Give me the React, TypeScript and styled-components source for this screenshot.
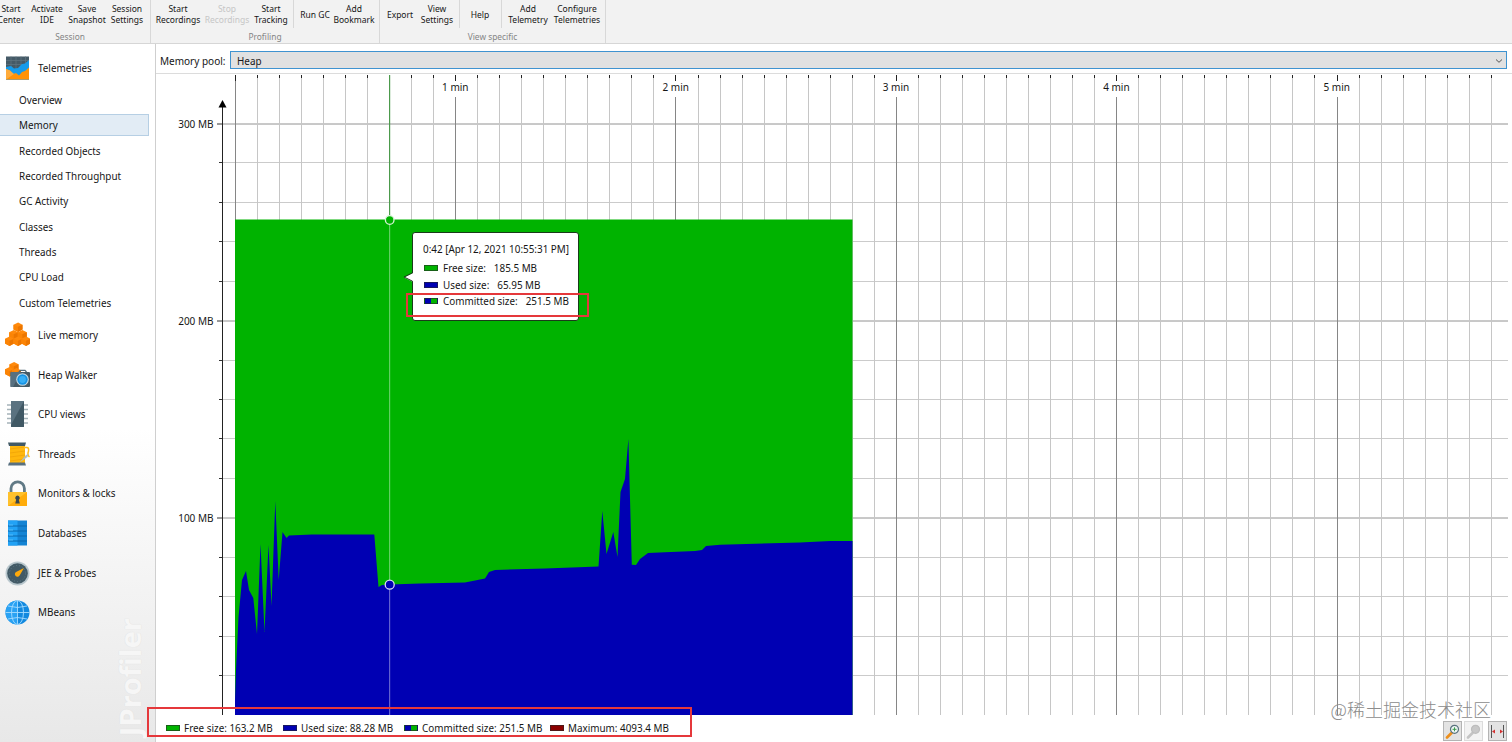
import React from "react";
import styled, { createGlobalStyle } from "styled-components";

const GlobalStyle = createGlobalStyle`
  * { box-sizing: border-box; }
  html, body { margin: 0; padding: 0; }
  body {
    width: 1512px;
    height: 742px;
    overflow: hidden;
    background: #fff;
    color: #161616;
    font-family: "Noto Sans", "Noto Sans CJK SC", sans-serif;
    font-size: 9.9px;
  }
`;

const Window = styled.div`
  position: relative;
  display: flex;
  flex-direction: column;
  width: 1512px;
  height: 742px;
  overflow: hidden;
`;

const Toolbar = styled.div`
  display: flex;
  flex: none;
  height: 44px;
  background: #f2f2f2;
  border-bottom: 1px solid #d6d6d6;
`;

const ToolGroup = styled.div<{ $width: number; $shift?: number }>`
  display: flex;
  flex: none;
  flex-direction: column;
  width: ${(p) => p.$width}px;
  margin-left: ${(p) => p.$shift ?? 0}px;
  border-right: 1px solid #d8d8d8;
`;

const ToolRow = styled.div<{ $pad: number }>`
  display: flex;
  height: 29px;
  padding-left: ${(p) => p.$pad}px;
`;

const Tool = styled.div<{ $width: number; $disabled?: boolean }>`
  display: flex;
  flex: none;
  align-items: center;
  justify-content: center;
  width: ${(p) => p.$width}px;
  height: 28px;
  font-size: 8.5px;
  line-height: 11px;
  text-align: center;
  white-space: pre;
  color: ${(p) => (p.$disabled ? "#c6c6c6" : "#161616")};
`;

const ToolDivider = styled.div<{ $gap: number }>`
  flex: none;
  width: 1px;
  height: 28px;
  margin: 0 ${(p) => p.$gap}px;
  background: #d8d8d8;
`;

const GroupLabel = styled.div`
  height: 14px;
  font-size: 8.4px;
  line-height: 16px;
  text-align: center;
  color: #858585;
`;

const Body = styled.div`
  display: flex;
  flex: 1;
  min-height: 0;
`;

const Sidebar = styled.nav`
  position: relative;
  flex: none;
  width: 156px;
  padding-top: 4px;
  border-right: 1px solid #cfcfcf;
  background: linear-gradient(#fff 0%, #fff 55%, #e8e8e8 100%);
`;

const Section = styled.div`
  display: flex;
  align-items: center;
  gap: 8px;
  height: 39.6px;
  padding-left: 5px;
`;

const SubList = styled.div`
  display: flex;
  flex-direction: column;
  gap: 3.3px;
  padding: 1.6px 0;
`;

const SubItem = styled.div<{ $active?: boolean }>`
  display: flex;
  align-items: center;
  width: 149px;
  height: 22px;
  padding-left: 19px;
  border: 1px solid ${(p) => (p.$active ? "#b6cfe4" : "transparent")};
  border-left: 0;
  background: ${(p) => (p.$active ? "#e2ecf5" : "transparent")};
`;

const Brand = styled.div`
  position: absolute;
  right: 8px;
  bottom: 6px;
  writing-mode: vertical-rl;
  transform: rotate(180deg);
  font: bold 29px/34px "Open Sans", sans-serif;
  color: #f6f6f6;
  text-shadow: 0 0 1px #dadada;
`;

const Main = styled.main`
  position: relative;
  display: flex;
  flex: 1;
  flex-direction: column;
  min-width: 0;
`;

const PoolRow = styled.div`
  display: flex;
  flex: none;
  align-items: center;
  height: 30px;
  padding: 3px 5px 0 4px;
  border-bottom: 1px solid #dcdcdc;
`;

const PoolLabel = styled.div`
  width: 70px;
  padding-top: 1px;
  font-size: 10px;
  white-space: nowrap;
`;

const Select = styled.div`
  display: flex;
  flex: 1;
  align-items: center;
  justify-content: space-between;
  height: 18px;
  padding: 1px 3px 0 6px;
  border: 1px solid #3f93d0;
  background: #e1e1e1;
`;

const ChartArea = styled.div`
  position: relative;
  flex: none;
  height: 642px;

  > svg { display: block; }
`;

const Footer = styled.footer`
  display: flex;
  flex: 1;
  align-items: flex-start;
  justify-content: space-between;
  padding: 4px 5px 0 10px;
`;

const Legend = styled.div`
  display: flex;
  align-items: center;
  height: 16px;
`;

const LegendItem = styled.div<{ $width: number }>`
  display: flex;
  align-items: center;
  gap: 4px;
  width: ${(p) => p.$width}px;
  white-space: nowrap;
`;

const Swatch = styled.span<{ $left: string; $right?: string }>`
  flex: none;
  width: 14px;
  height: 6px;
  border: 1px solid rgba(40, 40, 40, 0.6);
  background: linear-gradient(
    90deg,
    ${(p) => p.$left} 50%,
    ${(p) => p.$right ?? p.$left} 50%
  );
`;

const Buttons = styled.div`
  display: flex;
  align-items: center;
  gap: 2px;
  margin-top: 1px;
`;

const ZoomButton = styled.button<{ $faded?: boolean; $spaced?: boolean }>`
  display: flex;
  align-items: center;
  justify-content: center;
  width: 19px;
  height: 20px;
  margin-left: ${(p) => (p.$spaced ? 3 : 0)}px;
  padding: 0;
  border: 1px solid ${(p) => (p.$faded ? "#dcdcdc" : "#b4b4b4")};
  background: ${(p) => (p.$faded ? "#f3f3f3" : "#e3e3e3")};
`;

const Tooltip = styled.div`
  position: absolute;
  left: 256px;
  top: 158px;
  width: 167px;
  height: 89px;
  padding: 9px 0 0 10px;
  border: 1px solid #1b3a1b;
  border-radius: 3px;
  background: #fff;
`;

const TooltipArrow = styled.svg`
  position: absolute;
  left: -10px;
  top: 37px;
`;

const TooltipTitle = styled.div`
  height: 17px;
  margin-bottom: 1px;
  line-height: 15px;
  white-space: nowrap;
`;

const TooltipRow = styled.div`
  display: flex;
  align-items: center;
  height: 16.6px;
  padding-left: 1px;
  white-space: nowrap;
`;

const TooltipName = styled.span`
  margin: 0 8px 0 5px;
`;

const RedFrame = styled.div<{ $x: number; $y: number; $w: number; $h: number }>`
  position: absolute;
  left: ${(p) => p.$x}px;
  top: ${(p) => p.$y}px;
  width: ${(p) => p.$w}px;
  height: ${(p) => p.$h}px;
  border: 2px solid #e5383b;
`;

const Credit = styled.div`
  position: absolute;
  right: 21px;
  top: 696px;
  font: 300 18px/26px "Noto Sans CJK SC", sans-serif;
  color: #8c8c8c;
  white-space: nowrap;
`;

const GREEN = "#00b300";
const BLUE = "#0000b3";

const Cube = ({ x, y }: { x: number; y: number }) => (
  <g transform={`translate(${x} ${y})`}>
    <path d="M0 2.2 4.6 0 9 2.2 9 7 4.6 9.4 0 7Z" fill="#ff8a0c" />
    <path d="M0 2.2 4.4 4.3 4.6 9.4 0 7Z" fill="#fb8405" />
    <path d="M4.4 4.3 9 2.2 9 7 4.6 9.4Z" fill="#ec7600" />
  </g>
);

const icons: Record<string, React.ReactNode> = {
  telemetries: (
    <>
      <rect x="1" y="1.5" width="23" height="23" fill="#455a67" />
      <path d="M1 5.5H24M1 9.5H24M6 1.5V14M11 1.5V14M16 1.5V14M20.5 1.5V14" stroke="#607582" strokeWidth=".7" />
      <path d="M1 12 6 11 9 13.5 13 13 17 9 20 8.5 24 5V24.5H1Z" fill="#169bea" />
      <path d="M1 14 5 15.5 8 19 11 18 14 20.5 17 17 20 16 24 12.5V24.5H1Z" fill="#ff9206" />
      <path d="M1 24.5 9 19 5 15.5 1 14Z" fill="#ffab3b" />
    </>
  ),
  live: (
    <>
      <Cube x={8.5} y={0.5} />
      <Cube x={4.2} y={8} />
      <Cube x={12.8} y={8} />
      <Cube x={0} y={14.5} />
      <Cube x={8.5} y={14.5} />
      <Cube x={16.5} y={14.5} />
    </>
  ),
  heap: (
    <>
      <Cube x={4.5} y={0} />
      <Cube x={0} y={5} />
      <Cube x={7} y={6} />
      <path d="M14 10 15.5 8.3H20L21.5 10" fill="none" stroke="#526a77" strokeWidth="1.3" />
      <rect x="5.5" y="10" width="19.5" height="15" rx="1" fill="#455a65" />
      <path d="M5.5 11a1 1 0 0 1 1-1H16L8 25H5.5Z" fill="#587080" />
      <circle cx="17.5" cy="17.5" r="6.3" fill="#c8dce5" />
      <circle cx="17.5" cy="17.5" r="5.2" fill="#1793e4" />
      <circle cx="17.5" cy="17.5" r="3.4" fill="#36aef5" />
    </>
  ),
  cpu: (
    <>
      <path d="M2 4H23M2 8.5H23M2 13H23M2 17.5H23M2 22H23" stroke="#a5b3b9" strokeWidth="1.5" />
      <rect x="6" y="0" width="13" height="26" rx=".6" fill="#415965" />
      <path d="M6 0H19L6 24Z" fill="#5a7280" />
    </>
  ),
  threads: (
    <>
      <rect x="5" y="4" width="15" height="18" fill="#ffb70d" />
      <path d="M5 8 20 6M5 12 20 10M5 16 20 14M5 20 20 18" stroke="#f0a307" strokeWidth=".8" />
      <path d="M19 6.5H22Q24 6.500 23.5 10Q22 14 24.5 16" fill="none" stroke="#ffbd1d" strokeWidth="1.5" />
      <path d="M14 22 21 14 23.500 13 22.500 16Z" fill="#b0bdc3" />
      <path d="M3 1.500H21L20 5H4Z" fill="#415965" />
      <path d="M4 21.500H20L21 24.500H3Z" fill="#587080" />
    </>
  ),
  lock: (
    <>
      <path d="M6 13V8.5a6.7 6.7 0 0 1 13.4 0V13" fill="none" stroke="#607985" strokeWidth="2.8" />
      <rect x="3" y="12" width="19" height="14" fill="#ffac0a" />
      <path d="M3 12H22L3 26Z" fill="#ffc12c" />
      <path d="M12.5 15.5a2.4 2.4 0 0 1 1.3 4.3L14.8 23.5H10.2L11.2 19.8A2.4 2.4 0 0 1 12.5 15.5Z" fill="#37464f" />
    </>
  ),
  database: (
    <>
      <rect x="3" y="0.5" width="19" height="25" fill="#1484d4" />
      <rect x="3" y="0.5" width="9.5" height="25" fill="#22a2f5" />
      <path d="M3 6H22M3 11H22M3 16H22M3 21H22" stroke="#0b66ac" strokeWidth="1" />
      <path d="M4 5H8M4 10H8M4 15H8M4 20H8" stroke="#5fc5ff" strokeWidth=".8" />
    </>
  ),
  probes: (
    <>
      <circle cx="12.5" cy="13.5" r="12" fill="#b9c7cd" />
      <circle cx="12.5" cy="13.5" r="10.3" fill="#425a66" />
      <circle cx="12.5" cy="13.5" r="8" fill="none" stroke="#607985" strokeWidth="1" strokeDasharray="1 2" />
      <path d="M19 8 14.9 15A2.6 2.6 0 1 1 11.5 11.7Z" fill="#ffaa0b" />
    </>
  ),
  beans: (
    <>
      <circle cx="12.5" cy="13.5" r="12" fill="#1289df" />
      <path d="M12.5 1.5a12 12 0 0 0 0 24Z" fill="#2aa2f3" />
      <g fill="none" stroke="#a5dbff" strokeWidth=".9">
        <ellipse cx="12.5" cy="13.5" rx="6" ry="12" />
        <path d="M12.5 1.5V25.5M.5 13.5H24.5M3 7Q12.5 10 22 7M3 20Q12.5 17 22 20" />
      </g>
    </>
  ),
};

const SectionRow = ({ icon, label }: { icon: string; label: string }) => (
  <Section>
    <svg width="25" height="26" viewBox="0 0 25 26">{icons[icon]}</svg>
    {label}
  </Section>
);

const subItems = [
  "Overview", "Memory", "Recorded Objects", "Recorded Throughput", "GC Activity",
  "Classes", "Threads", "CPU Load", "Custom Telemetries",
];

const sections: [string, string][] = [
  ["live", "Live memory"], ["heap", "Heap Walker"], ["cpu", "CPU views"],
  ["threads", "Threads"], ["lock", "Monitors & locks"], ["database", "Databases"],
  ["probes", "JEE & Probes"], ["beans", "MBeans"],
];

// Chart geometry, in window coordinates; the viewBox starts at (156, 74).
const X0 = 235.3;
const MINUTE = 220.34;
const Y0 = 715.5;
const MB = 1.972;

const used: [number, number][] = [
  [235, 700], [236, 670], [238.5, 617], [242, 580], [246, 571], [249, 590], [253.3, 598],
  [257, 634], [260.5, 544], [264.5, 632], [268.5, 545], [271.5, 606], [275.3, 501],
  [278.7, 580], [282.5, 532], [286.5, 538], [289, 535.5], [312, 534.5], [374.3, 534.5],
  [378.5, 587], [382, 585], [390, 584.5], [420, 583.5], [465, 582.5], [485, 578.5],
  [489, 572], [495, 570], [545, 568.5], [598.5, 566.5], [602.3, 511], [606.5, 554],
  [613.3, 532], [617.5, 557], [620.5, 492], [625, 479], [628.4, 439], [631.8, 564.8],
  [636, 565], [640, 559], [648, 553], [665, 552.3], [695, 551], [702, 550], [706, 546],
  [720, 544.7], [800, 542.5], [830, 541], [852.5, 541],
];

const Chart = () => {
  const columns = Array.from({ length: 58 }, (_, i) => i);
  const rows = Array.from({ length: 15 }, (_, i) => i + 1);
  return (
    <svg width="1356" height="642" viewBox="156 74 1356 642">
      {rows.map((i) => {
        const y = Math.round(Y0 - i * 20 * MB) - 0.5 + (i % 5 === 0 ? 0.5 : 0);
        const major = i % 5 === 0;
        return (
          <g key={i}>
            <path d={`M223 ${y}H1508`} stroke={major ? "#929292" : "#cbcbcb"} />
            <path d={`M${major ? 217 : 219} ${y}H223`} stroke="#333" />
          </g>
        );
      })}
      {columns.map((i) => {
        const x = Math.floor(X0 + (i * MINUTE) / 10) + 0.5;
        const major = i % 10 === 0;
        return (
          <g key={i}>
            <path d={`M${x} ${major && i ? 97 : 78}V715`} stroke={major ? "#868686" : "#c6c6c6"} />
            <path d={`M${x} 75V${major ? 81 : 78}`} stroke="#222" />
          </g>
        );
      })}
      {[1, 2, 3, 4, 5].map((m) => (
        <text key={m} x={X0 + m * MINUTE - 0.3} y="91.3" fontSize="10" fill="#161616" textAnchor="middle">
          {m} min
        </text>
      ))}
      {[300, 200, 100].map((v) => (
        <text key={v} x="213.5" y={Y0 - v * MB + 4} fontSize="10" fill="#161616" textAnchor="end">
          {v} MB
        </text>
      ))}
      <path d="M222.5 106V715" stroke="#222" />
      <path d="M222.5 100 226.5 107.5H218.5Z" fill="#000" />
      <path d="M235 219.5H852.5V715H235Z" fill={GREEN} />
      <path d={`M235 715L${used.map((p) => p.join(" ")).join("L")}L852.5 715Z`} fill={BLUE} />
      <path d="M389.6 75V216" stroke="#4c9a4c" strokeWidth="1.2" />
      <path d="M389.6 224V580M389.6 589V715" stroke="#fff" strokeOpacity=".38" strokeWidth="1.2" />
      <circle cx="389.7" cy="220" r="4.3" fill={GREEN} stroke="#d7f2d7" strokeWidth="1.3" />
      <circle cx="389.7" cy="584.7" r="4.5" fill={BLUE} stroke="#d9dcf5" strokeWidth="1.3" />
    </svg>
  );
};

const Magnifier = ({ faded }: { faded?: boolean }) => (
  <svg width="15" height="15" viewBox="0 0 15 15">
    <path d="M2 13.5 6.5 9" stroke={faded ? "#c4c4c4" : "#ec8f1c"} strokeWidth="2.6" strokeLinecap="round" />
    <circle cx="9.5" cy="5.3" r="4" fill={faded ? "#c8c8c8" : "#eef6f4"} stroke={faded ? "#bdbdbd" : "#58717d"} strokeWidth="1.2" />
    {!faded && <path d="M9.5 3.3V7.3M7.5 5.3H11.5" stroke="#3d9c4c" />}
  </svg>
);

export default function App() {
  return (
    <Window>
      <GlobalStyle />
      <Toolbar>
        <ToolGroup $width={161} $shift={-10}>
          <ToolRow $pad={4}>
            <Tool $width={34}>{"Start\nCenter"}</Tool>
            <Tool $width={38}>{"Activate\nIDE"}</Tool>
            <Tool $width={42}>{"Save\nSnapshot"}</Tool>
            <Tool $width={38}>{"Session\nSettings"}</Tool>
          </ToolRow>
          <GroupLabel>Session</GroupLabel>
        </ToolGroup>
        <ToolGroup $width={229}>
          <ToolRow $pad={2}>
            <Tool $width={50}>{"Start\nRecordings"}</Tool>
            <Tool $width={48} $disabled>{"Stop\nRecordings"}</Tool>
            <Tool $width={40}>{"Start\nTracking"}</Tool>
            <ToolDivider $gap={2} />
            <Tool $width={38}>Run GC</Tool>
            <Tool $width={40}>{"Add\nBookmark"}</Tool>
          </ToolRow>
          <GroupLabel>Profiling</GroupLabel>
        </ToolGroup>
        <ToolGroup $width={226}>
          <ToolRow $pad={4}>
            <Tool $width={32}>Export</Tool>
            <Tool $width={42}>{"View\nSettings"}</Tool>
            <ToolDivider $gap={1} />
            <Tool $width={38}>Help</Tool>
            <ToolDivider $gap={2} />
            <Tool $width={48}>{"Add\nTelemetry"}</Tool>
            <Tool $width={50}>{"Configure\nTelemetries"}</Tool>
          </ToolRow>
          <GroupLabel>View specific</GroupLabel>
        </ToolGroup>
      </Toolbar>
      <Body>
        <Sidebar>
          <SectionRow icon="telemetries" label="Telemetries" />
          <SubList>
            {subItems.map((s) => (
              <SubItem key={s} $active={s === "Memory"}>{s}</SubItem>
            ))}
          </SubList>
          {sections.map(([icon, label]) => (
            <SectionRow key={icon} icon={icon} label={label} />
          ))}
          <Brand>JProfiler</Brand>
        </Sidebar>
        <Main>
          <PoolRow>
            <PoolLabel>Memory pool:</PoolLabel>
            <Select>
              Heap
              <svg width="8" height="6" viewBox="0 0 8 6">
                <path d="M1 1.5 4 4.3 7 1.5" fill="none" stroke="#555" />
              </svg>
            </Select>
          </PoolRow>
          <ChartArea>
            <Chart />
            <Tooltip>
              <TooltipArrow width="11" height="14" viewBox="0 0 11 14">
                <path d="M10 1V3L1 7.5 10 12V13H11V1Z" fill="#fff" />
                <path d="M9.5 0V2.8L1 7 9.5 11.2V14" fill="none" stroke="#1b3a1b" />
              </TooltipArrow>
              <TooltipTitle>0:42 [Apr 12, 2021 10:55:31 PM]</TooltipTitle>
              <TooltipRow>
                <Swatch $left={GREEN} />
                <TooltipName>Free size:</TooltipName>185.5 MB
              </TooltipRow>
              <TooltipRow>
                <Swatch $left={BLUE} />
                <TooltipName>Used size:</TooltipName>65.95 MB
              </TooltipRow>
              <TooltipRow>
                <Swatch $left={BLUE} $right={GREEN} />
                <TooltipName>Committed size:</TooltipName>251.5 MB
              </TooltipRow>
            </Tooltip>
          </ChartArea>
          <Footer>
            <Legend>
              <LegendItem $width={117}><Swatch $left={GREEN} />Free size: 163.2 MB</LegendItem>
              <LegendItem $width={121}><Swatch $left={BLUE} />Used size: 88.28 MB</LegendItem>
              <LegendItem $width={146}><Swatch $left={BLUE} $right={GREEN} />Committed size: 251.5 MB</LegendItem>
              <LegendItem $width={120}><Swatch $left="#8b0000" />Maximum: 4093.4 MB</LegendItem>
            </Legend>
            <Buttons>
              <ZoomButton><Magnifier /></ZoomButton>
              <ZoomButton $faded><Magnifier faded /></ZoomButton>
              <ZoomButton $spaced>
                <svg width="15" height="15" viewBox="0 0 15 15">
                  <path d="M1.5 1V14M13.5 1V14" stroke="#555" />
                  <path d="M2 7.5 5 5.5V9.5ZM13 7.5 10 5.5V9.5Z" fill="#d32f2f" />
                </svg>
              </ZoomButton>
            </Buttons>
          </Footer>
        </Main>
      </Body>
      <RedFrame $x={406} $y={293} $w={183} $h={24} />
      <RedFrame $x={147} $y={707} $w={545} $h={30} />
      <Credit>@稀土掘金技术社区</Credit>
    </Window>
  );
}
